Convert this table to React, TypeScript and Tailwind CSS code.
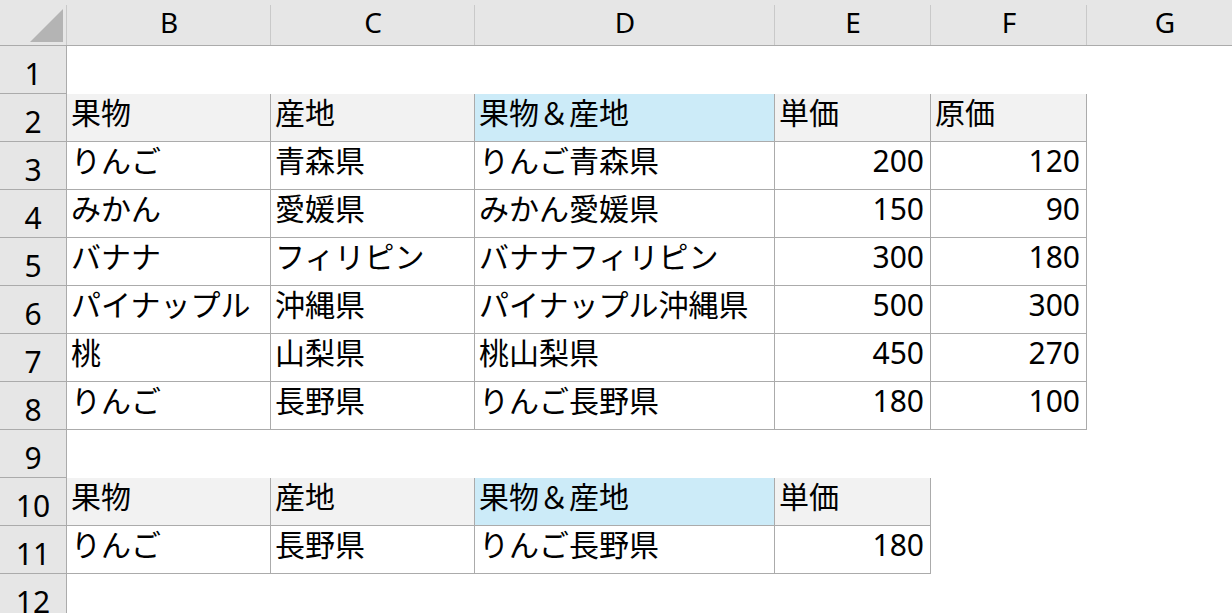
const COLS = ["B", "C", "D", "E", "F", "G"];
const COL_W = ["w-[204px]", "w-[204px]", "w-[300px]", "w-[156px]", "w-[156px]", "w-[156px]"];

type Cell = { v: string; num?: boolean; head?: boolean; blue?: boolean };

const t1Head: Cell[] = [
  { v: "果物", head: true },
  { v: "産地", head: true },
  { v: "果物＆産地", head: true, blue: true },
  { v: "単価", head: true },
  { v: "原価", head: true },
];

const t1Rows: [string, string, string, string][] = [
  ["りんご", "青森県", "200", "120"],
  ["みかん", "愛媛県", "150", "90"],
  ["バナナ", "フィリピン", "300", "180"],
  ["パイナップル", "沖縄県", "500", "300"],
  ["桃", "山梨県", "450", "270"],
  ["りんご", "長野県", "180", "100"],
];

// grid[row][col] ; row 1..12, col 0..5 (B..G)
function buildGrid() {
  const g: (Cell | null)[][] = [];
  for (let r = 0; r <= 12; r++) g.push([null, null, null, null, null, null]);
  g[2] = [...t1Head, null];
  t1Rows.forEach((row, i) => {
    const [fruit, place, price, cost] = row;
    g[3 + i] = [
      { v: fruit },
      { v: place },
      { v: fruit + place },
      { v: price, num: true },
      { v: cost, num: true },
      null,
    ];
  });
  g[10] = [...t1Head.slice(0, 4), null, null];
  g[11] = [
    { v: "りんご" },
    { v: "長野県" },
    { v: "りんご長野県" },
    { v: "180", num: true },
    null,
    null,
  ];
  return g;
}

const grid = buildGrid();

function inTable(r: number, c: number) {
  if (r < 0 || r > 12 || c < 0 || c > 5) return false;
  return grid[r][c] !== null;
}

function Corner() {
  return (
    <div className="relative h-[46px] w-[67px] shrink-0 border-b border-[#ababab] bg-[#e6e6e6]">
      <svg className="absolute left-0 top-0" width="67" height="46">
        <polygon points="63,9 63,42 30,42" fill="#b4b4b4" />
      </svg>
      <div className="absolute right-0 top-[5px] bottom-0 w-px bg-[#c9c9c9]" />
    </div>
  );
}

export default function App() {
  return (
    <div
      className="h-[613px] w-[1232px] overflow-hidden bg-white text-black"
      style={{ fontFamily: '"Noto Sans", "Noto Sans CJK JP", sans-serif' }}
    >
      <div className="flex">
        <Corner />
        {COLS.map((c, i) => (
          <div
            key={c}
            className={`relative flex h-[46px] shrink-0 items-center justify-center border-b border-[#ababab] bg-[#e6e6e6] pb-[2px] text-[28px] ${COL_W[i]}`}
          >
            {c}
            {i < 5 && <div className="absolute right-0 top-[5px] bottom-0 w-px bg-[#c9c9c9]" />}
          </div>
        ))}
      </div>

      {Array.from({ length: 12 }, (_, k) => k + 1).map((r) => (
        <div key={r} className="flex h-[48px]">
          <div className="flex w-[67px] shrink-0 items-start justify-center border-b border-r border-[#ababab] bg-[#e6e6e6] pt-[13px] text-[30px] leading-none">
            {r}
          </div>
          {COL_W.map((w, c) => {
            const cell = grid[r][c];
            const bb = inTable(r, c) || inTable(r + 1, c);
            const br = inTable(r, c) || inTable(r, c + 1);
            const bg = cell?.blue ? "bg-[#ccebf8]" : cell?.head ? "bg-[#f2f2f2]" : "bg-white";
            return (
              <div
                key={c}
                className={`flex shrink-0 items-center whitespace-nowrap pb-[10px] text-[30px] leading-none ${w} ${bg} ${
                  bb ? "border-b border-[#ababab]" : "border-b border-transparent"
                } ${br ? "border-r border-[#ababab]" : "border-r border-transparent"} ${
                  cell?.num ? "justify-end pr-[6px]" : "pl-[4px]"
                }`}
              >
                {cell?.v}
              </div>
            );
          })}
        </div>
      ))}
    </div>
  );
}
